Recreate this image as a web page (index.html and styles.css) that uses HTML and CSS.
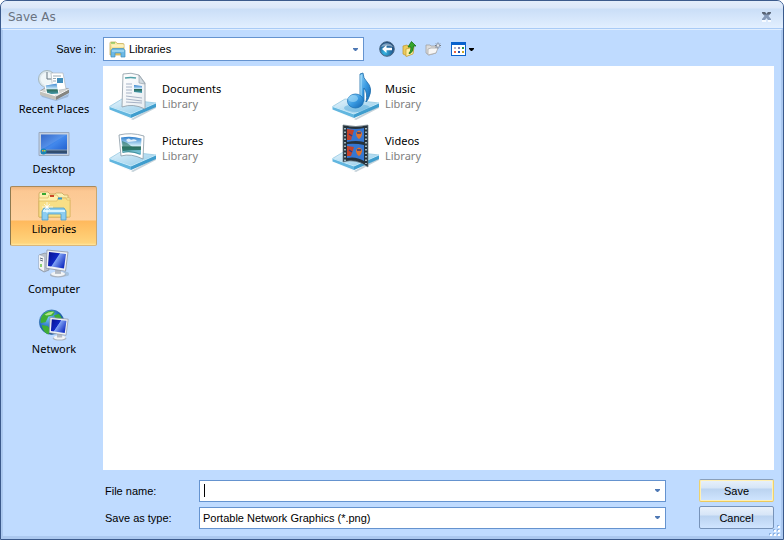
FILE: index.html
```
<!DOCTYPE html>
<html lang="en">
<head>
<meta charset="utf-8">
<title>Save As</title>
<link rel="stylesheet" href="styles.css">
</head>
<body>
<svg class="defs" aria-hidden="true">
  <defs>
    <linearGradient id="glass" x1="0" y1="0" x2="1" y2="1"><stop offset="0" stop-color="#e6f4fc"/><stop offset=".5" stop-color="#b9def2"/><stop offset="1" stop-color="#8fcbe8"/></linearGradient>
    <linearGradient id="screen" x1="0" y1="0" x2="1" y2=".6"><stop offset="0" stop-color="#06108f"/><stop offset=".5" stop-color="#1029c4"/><stop offset=".54" stop-color="#7fa2f4"/><stop offset="1" stop-color="#1733c4"/></linearGradient>
    <linearGradient id="desk" x1="0" y1="0" x2="1" y2="1"><stop offset="0" stop-color="#1c55c2"/><stop offset=".5" stop-color="#4288ec"/><stop offset="1" stop-color="#1c58ca"/></linearGradient>
    <linearGradient id="folder" x1="0" y1="0" x2="0" y2="1"><stop offset="0" stop-color="#fff5bd"/><stop offset="1" stop-color="#e9c65b"/></linearGradient>
    <linearGradient id="photo" x1="0" y1="0" x2="0" y2="1"><stop offset="0" stop-color="#2c7dcc"/><stop offset=".5" stop-color="#d4effa"/><stop offset=".56" stop-color="#2d6b59"/><stop offset="1" stop-color="#4ba4c0"/></linearGradient>
    <linearGradient id="paper" x1="0" y1="0" x2="1" y2="1"><stop offset="0" stop-color="#ffffff"/><stop offset="1" stop-color="#e6ecf1"/></linearGradient>
    <linearGradient id="note" x1="0" y1="0" x2="1" y2="1"><stop offset="0" stop-color="#8fd2f8"/><stop offset=".5" stop-color="#3a9be2"/><stop offset="1" stop-color="#1363ae"/></linearGradient>
    <radialGradient id="ball" cx=".35" cy=".75" r=".8"><stop offset="0" stop-color="#35b9e6"/><stop offset=".6" stop-color="#23649b"/><stop offset="1" stop-color="#173f70"/></radialGradient>
    <radialGradient id="earth" cx=".35" cy=".3" r=".8"><stop offset="0" stop-color="#7cc8f4"/><stop offset=".6" stop-color="#1d65bd"/><stop offset="1" stop-color="#0c3278"/></radialGradient>
    <symbol id="tray" viewBox="0 0 48 48">
      <path d="M1 38 22 47 47 34v2L24 48z" fill="#8ba6b6" opacity=".5"/>
      <path d="M.500 34.500 13 27 47 31 22 42z" fill="url(#glass)" stroke="#8cc4e0" stroke-width=".7"/>
      <path d="M.500 34.500 22 42v4L.500 37.500z" fill="#62b6df"/><path d="M22 42 47 31v4L22 46z" fill="#3f9dcd"/>
      <path d="M.500 34.500 22 42 47 31" fill="none" stroke="#d8f4ff" stroke-width=".8"/>
    </symbol>
    <symbol id="monitor" viewBox="0 0 24 28" preserveAspectRatio="none">
      <ellipse cx="13" cy="25" rx="8" ry="2.500" fill="#a9b3c0"/><ellipse cx="13" cy="24" rx="7" ry="2.300" fill="#f2f4f6"/>
      <path d="M10 19h6v5h-6z" fill="#b4bac4"/>
      <path d="M2 1 23 3 20.500 21.500 1 18.500z" fill="#eef1f5" stroke="#8c96a5" stroke-width=".8"/>
      <path d="M4 3 21 4.800 19 18.800 3 16.500z" fill="url(#screen)"/>
    </symbol>
  </defs>
</svg>

<div class="window" role="dialog" aria-labelledby="title">
  <header class="titlebar">
    <h1 id="title">Save As</h1>
    <button class="close" type="button" aria-label="Close">
      <svg width="11" height="10" viewBox="0 0 11 10"><path d="M1 9h4M7 9h3" stroke="#fff" stroke-width="1.500"/><path d="M1 0h3l1.500 2L7 0h3v1L7.500 4 10 7v1H7L5.500 6 4 8H1V7l2.500-3L1 1z" fill="#8499b8"/><path d="M1 0h3l1.500 2L7 0h3v1L8.500 2.500h-6L1 1z" fill="#596474"/></svg>
    </button>
  </header>

  <form class="content">
    <div class="toolbar">
      <label for="savein">Save in:</label>
      <div class="combo location">
        <svg class="combo-icon" width="17" height="17" viewBox="0 0 17 17"><path d="M1 2q0-1 1-1h5l1 1.500h6q1 0 1 1V14H1z" fill="url(#folder)" stroke="#c9ae5b" stroke-width=".8"/><path d="M2 2h4" stroke="#59b73a"/><path d="M3 5h12" stroke="#fffbdc"/><path d="M2 16V9.500l1.500-2h11l1.500 2V16h-4v-4H6v4z" fill="#6cb9e5" stroke="#3f8fbe" stroke-width=".7"/><path d="M3 10h12" stroke="#c2ebfb"/></svg>
        <select id="savein"><option>Libraries</option></select>
        <svg class="arrow" width="5" height="3" viewBox="0 0 5 3"><path d="M0 0h5v1L3 3H2L0 1z" fill="#4e78b4"/></svg>
      </div>
      <div class="tools">
        <button type="button" aria-label="Back"><svg width="16" height="16" viewBox="0 0 16 16"><circle cx="8" cy="8" r="7.300" fill="url(#ball)" stroke="#4a6683"/><path d="M2 6a6.500 6 0 0 1 12 0q-6-2-12 0z" fill="#c3d6e5" opacity=".6"/><path d="M3 8 7.500 4v2.800H13v2.400H7.500V12z" fill="#fff"/></svg></button>
        <button type="button" aria-label="Up one level"><svg width="16" height="16" viewBox="0 0 16 16"><path d="M1 5l4-1 1 1 5-1v8L5 15 1 13z" fill="#eccb5c" stroke="#bd942b" stroke-width=".7"/><path d="M4 8l8-2-1 7-7 2.500z" fill="#fff0a4" stroke="#c49b31" stroke-width=".7"/><path d="M7 12q2-1 2-6H6L9.500.500 14 5h-2.500q0 6-4 8z" fill="#36a62a" stroke="#16711a" stroke-width=".8"/></svg></button>
        <button type="button" aria-label="Create new folder"><svg width="16" height="16" viewBox="0 0 16 16"><path d="M1 4h4l1 1h5v7l-7 2-3-2z" fill="#dcdcdc" stroke="#a2a2a2" stroke-width=".8"/><path d="M3 8l3-1h7l-2 5-8 2z" fill="#f6f6f6" stroke="#a9a9a9" stroke-width=".8"/><path d="M13 1.500v6M10 4.500h6M11 2.500l4 4M15 2.500l-4 4" stroke="#747a83"/><circle cx="13" cy="4.500" r="1.300" fill="#e5eaf1"/></svg></button>
        <button type="button" aria-label="View menu"><svg width="24" height="14" viewBox="0 0 24 14"><rect x=".500" y=".500" width="14" height="13" fill="#fff" stroke="#0a62cd"/><path d="M0 0h15v3H0z" fill="#0a62cd"/><path d="M3 5h2v2H3z" fill="#b7b4c7"/><path d="M7 5h2v2H7z" fill="#827eac"/><path d="M11 5h2v2h-2z" fill="#289449"/><path d="M3 9h2v2H3z" fill="#ed623f"/><path d="M7 9h2v2H7z" fill="#194db0"/><path d="M11 9h2v2h-2z" fill="#cda629"/><path d="M18 6h5v1l-2 2h-1l-2-2z" fill="#000"/></svg></button>
      </div>
    </div>

    <div class="browser">
      <nav class="places" aria-label="Places">
        <button type="button">
          <svg width="32" height="32" viewBox="0 0 32 32"><path d="M2 25 18 31 31 25 30 28 18 32 4 28z" fill="#8097b3" opacity=".5"/><circle cx="9" cy="10" r="8.500" fill="#dce7ec" stroke="#a3b6bd"/><circle cx="9" cy="10" r="6.500" fill="#eff6f8"/><path d="M9 3v7h5" fill="none" stroke="#65757e"/><path d="M2 22 12 16 31 20 19 27z" fill="#d5d5d2" stroke="#8a8a88" stroke-width=".7"/><path d="M13 4 25 4 28 20 15 22z" fill="#fff" stroke="#b0b8be" stroke-width=".7"/><path d="M15 7h8M15 9.500h3M15 12h3" stroke="#9aabb6"/><path d="M19 9h6v5h-6z" fill="#408dbb"/><path d="M7 16 19 14 21 25 9 26z" fill="url(#photo)" stroke="#fff"/><path d="M2 22 18 27v4L2 26z" fill="#c3c2bc"/><path d="M18 27 31 20v4L18 31z" fill="#858581"/><path d="M2 22 18 27 31 20" fill="none" stroke="#fafafa"/></svg>
          <span>Recent Places</span>
        </button>
        <button type="button">
          <svg width="32" height="32" viewBox="0 0 32 32"><path d="M1 3.500h30v23H1z" fill="#c5d0df" stroke="#9aa9bf"/><path d="M3 5.500h26v19H3z" fill="url(#desk)"/><path d="M3 5.500h26L3 21z" fill="#fff" opacity=".12"/><path d="M3 21h26v3.500H3z" fill="#314d70"/><path d="M8 21h21" stroke="#8199b4"/><circle cx="5.500" cy="22.500" r="3" fill="#1785b9"/><path d="M4 21h1.500v1.500H4z" fill="#f3a336"/><path d="M6 21h1.500v1.500H6z" fill="#a9dd4a"/></svg>
          <span>Desktop</span>
        </button>
        <button type="button" class="selected" aria-pressed="true">
          <svg width="34" height="32" viewBox="0 0 34 32"><path d="M2 5q0-2 2-2h7l2 2h5l1-1h6l2 2h4v22H2z" fill="url(#folder)" stroke="#c9a65b" stroke-width=".8"/><path d="M2 9h9l1-3h8l2 3h11v19H2z" fill="#fff0ad" stroke="#d8b866" stroke-width=".7"/><path d="M2 12h18l1-3h8l1 2h3v17H2z" fill="#f8df86" stroke="#d9b560" stroke-width=".7"/><path d="M5 5h4" stroke="#35a832" stroke-width="2"/><path d="M13 7h4" stroke="#cc4726" stroke-width="2"/><path d="M21 9.500h4" stroke="#3097cc" stroke-width="2"/><path d="M5 31V22l2-3h20l2 3v9h-5v-6H11v6z" fill="#8ccdf0" stroke="#4d9dc7" stroke-width=".8"/><path d="M6 22h22" stroke="#d8f5ff" stroke-width="2"/><path d="M10 13v11M5 18h11M7 15l6 6M13 15l-6 6" stroke="#fff" stroke-width=".7"/><circle cx="10" cy="18" r="1.500" fill="#fff"/></svg>
          <span>Libraries</span>
        </button>
        <button type="button">
          <svg width="32" height="32" viewBox="0 0 32 32"><path d="M1 6 7 4l4 2v15l-5 2-5-3z" fill="#b9c1cb" stroke="#868e99" stroke-width=".7"/><path d="M1 6l5 2v14l-5-3z" fill="#f3f4f5"/><path d="M2 9l3 1M2 11l3 1" stroke="#5d6c7d"/><path d="M3 15v3" stroke="#66c444" stroke-width="1.500"/><path d="M25 23q6-1 6 2t-5 2-3-2z" fill="#a6c2df"/><use href="#monitor" x="7" y="0" width="24" height="29"/></svg>
          <span>Computer</span>
        </button>
        <button type="button">
          <svg width="34" height="34" viewBox="0 0 34 34"><circle cx="14.500" cy="14" r="13" fill="url(#earth)" stroke="#2566a4" stroke-width=".7"/><path d="M5 6q6-6 13-3l-2 4-5 1-3 6-5 1q-1-5 2-9zM4 17l6 1 4 4-3 5q-6-2-7-10zM17 7l5-2q5 5 4 10l-6-3z" fill="#3fae35"/><path d="M7 6q5-4 10-3l-3 3-5 1z" fill="#b1e587"/><use href="#monitor" x="11" y="8" width="22" height="26"/></svg>
          <span>Network</span>
        </button>
      </nav>

      <ul class="files">
        <li><svg width="48" height="48" viewBox="0 0 48 48"><use href="#tray" width="48" height="48"/><path d="M14 2Q22 0 30 3L36 11V37Q24 31 13 35z" fill="url(#paper)" stroke="#8d9aa5" stroke-width=".8"/><path d="M30 3v8l6 1z" fill="#d2dce2" stroke="#8d9aa5" stroke-width=".6"/><path d="M16 6q6-1 11 0" fill="none" stroke="#52a1a9" stroke-width="1.500"/><path d="M17 12h6M17 15h6M17 18h6M17 21h6M17 24l16 2M17 27l16 2M17 30l16 1" stroke="#a7b3c6"/><path d="M25 13l8 1v7l-8-1z" fill="url(#photo)"/></svg><span class="name">Documents</span><span class="kind">Library</span></li>
        <li><svg width="48" height="48" viewBox="0 0 48 48"><use href="#tray" width="48" height="48"/><ellipse cx="25" cy="36" rx="13" ry="4" fill="#4ba4d7" opacity=".45"/><path d="M28 2 31 1q0 5 4 9 6 6 2 15-1 3-3 5 2-9-2-14V29h-4z" fill="url(#note)" stroke="#176aa9" stroke-width=".8"/><path d="M29 3v24" stroke="#b6e8ff"/><ellipse cx="23.500" cy="29" rx="8" ry="7" fill="url(#note)" stroke="#1d74b8" stroke-width=".8"/><ellipse cx="21" cy="26.500" rx="5" ry="3.500" fill="#a5dcf8" opacity=".6"/></svg><span class="name">Music</span><span class="kind">Library</span></li>
        <li><svg width="48" height="48" viewBox="0 0 48 48"><use href="#tray" width="48" height="48"/><path d="M10 11Q22 8 35 12L34 35Q22 29 12 32z" fill="#fff" stroke="#8698a5" stroke-width=".8"/><path d="M12 13.500q10-2 20.500 1L31.500 31q-9-4-18-2z" fill="url(#photo)"/><path d="M13 17q5 1 9 5t10 2v6q-9-4-18-2z" fill="#2b7666" opacity=".65"/><path d="M17 16q3-3 5 0 4-2 6 1l-9 1z" fill="#fff" opacity=".8"/><path d="M14 27q9-1 18-1v4q-9-4-18-2z" fill="#73bdd1"/></svg><span class="name">Pictures</span><span class="kind">Library</span></li>
        <li><svg width="48" height="48" viewBox="0 0 48 48"><use href="#tray" width="48" height="48"/><path d="M11 1Q24 4 36 1V43Q24 34 11 38z" fill="#26323b" stroke="#697a83" stroke-width=".7"/><path d="M15 4q9 2 17 0v14q-8-2-17 0zM15 20q9-1 17 1v16q-8-5-17-3z" fill="#3577d2"/><path d="M15 5l7 1-3 10h-4zM15 22l7 1-3 9h-4z" fill="#c3422b"/><path d="M24 9q3-5 6 0 0 4-3 6-3-2-3-6zM24 26q3-5 6 0 0 4-3 6-3-2-3-6z" fill="#df722d"/><path d="M25 9h4M25 26h4M17 10l3 2M17 26l3 2" stroke="#303c80" stroke-width="1.500"/><path d="M13 4v33M34 4v36" stroke="#c8e0ea" stroke-width="1.500" stroke-dasharray="1.500 2"/></svg><span class="name">Videos</span><span class="kind">Library</span></li>
      </ul>
    </div>

    <div class="fields">
      <label for="filename">File name:</label>
      <div class="combo">
        <input id="filename" type="text"><i class="caret"></i>
        <svg class="arrow" width="5" height="3" viewBox="0 0 5 3"><path d="M0 0h5v1L3 3H2L0 1z" fill="#4e78b4"/></svg>
      </div>
      <button class="action default" type="submit">Save</button>
      <label for="filetype">Save as type:</label>
      <div class="combo">
        <select id="filetype"><option>Portable Network Graphics (*.png)</option></select>
        <svg class="arrow" width="5" height="3" viewBox="0 0 5 3"><path d="M0 0h5v1L3 3H2L0 1z" fill="#4e78b4"/></svg>
      </div>
      <button class="action" type="button">Cancel</button>
    </div>
  </form>
  <svg class="grip" width="11" height="11" viewBox="0 0 11 11" aria-hidden="true"><path d="M8 0h2v2H8zM4 4h2v2H4zM8 4h2v2H8zM0 8h2v2H0zM4 8h2v2H4zM8 8h2v2H8z" fill="#8eb2df"/><path d="M9 1h2v2H9zM5 5h2v2H5zM9 5h2v2H9zM1 9h2v2H1zM5 9h2v2H5zM9 9h2v2H9z" fill="#fff"/></svg>
</div>
</body>
</html>
```
FILE: styles.css
```
* { box-sizing: border-box; }
body { margin: 0; background: #fff; font: 11px/16px "Liberation Sans", sans-serif; color: #000; }
svg { display: block; }
.defs { position: absolute; width: 0; height: 0; }
button, input, select { font: inherit; color: inherit; }

.window {
  position: relative;
  min-height: 100vh;
  display: flex;
  flex-direction: column;
  border: 1px solid #3b5a8c;
  border-radius: 7px 7px 0 0;
  background: #bfdbff;
  overflow: hidden;
}
.titlebar {
  display: flex;
  align-items: center;
  justify-content: space-between;
  height: 28px;
  padding: 5px 11px 0 7px;
  background: linear-gradient(#e3edfb 0, #dbe7f9 7px, #cadef7 8px, #e2efff 27px);
  border-bottom: 1px solid #a9cbf6;
}
.titlebar h1 { margin: 0; font: 12px/18px "DejaVu Sans", sans-serif; color: #69727f; }
.close { padding: 0; border: 0; background: none; }

.content {
  flex: 1;
  display: flex;
  flex-direction: column;
  padding: 7px 7px;
  border: solid #abc8ef;
  border-width: 0 2px 3px;
  border-top: 1px solid #e0eeff;
}
.toolbar { display: flex; align-items: center; margin-bottom: 5px; }
.toolbar label { width: 86px; margin-right: 7px; text-align: right; }
.combo {
  position: relative;
  display: flex;
  align-items: center;
  height: 22px;
  background: #fff;
  border: 1px solid #6593cf;
}
.location { width: 261px; height: 24px; padding-left: 5px; }
.combo input, .combo select {
  flex: 1;
  min-width: 0;
  height: 100%;
  padding: 0 16px 0 3px;
  border: 0;
  outline: 0;
  background: none;
  appearance: none;
}
.arrow { position: absolute; right: 5px; pointer-events: none; }
.caret { position: absolute; left: 4px; width: 1px; height: 13px; background: #000; }
.tools { display: flex; align-items: center; gap: 7px; margin-left: 15px; }
.tools button { padding: 0; border: 0; background: none; }
.tools button:last-child { margin-left: 3px; }

.browser { flex: 1; display: flex; gap: 6px; }
.places { width: 87px; font: 11px/16px "Noto Sans", sans-serif; }
.places button {
  display: flex;
  flex-direction: column;
  align-items: center;
  width: 100%;
  height: 60px;
  padding: 2px 0 0 1px;
  border: 1px solid transparent;
  background: none;
  white-space: nowrap;
}
.places svg { height: 32px; }
.places .selected {
  border-color: #a98a5c #c9a770 #d9b77d #8e794f;
  border-radius: 2px;
  background: linear-gradient(#efb67f 0, #fcc893 4px, #fed2a1 33px, #ffb95c 34px, #ffd47c 56px, #ffe7a0 58px);
}
.files {
  flex: 1;
  display: grid;
  grid-template-columns: repeat(auto-fill, 223px);
  grid-auto-rows: 52px;
  align-content: start;
  margin: 0;
  padding: 4px 6px;
  list-style: none;
  background: #fff;
  font: 11px/15px "Noto Sans", sans-serif;
}
.files li {
  display: grid;
  grid-template-columns: 48px 1fr;
  grid-template-rows: 15px 15px;
  align-content: center;
  column-gap: 5px;
}
.files li svg { grid-row: 1 / 3; align-self: center; }
.kind { color: #808080; }

.fields {
  display: grid;
  grid-template-columns: 94px 1fr 75px;
  gap: 4px 0;
  align-items: center;
  padding: 9px 0 0 95px;
}
.fields .combo { margin-right: 33px; }
.action {
  height: 23px;
  padding: 0;
  border: 1px solid #7793b9;
  border-radius: 2px;
  background: linear-gradient(#e9f1fb 0, #d6e5f7 8px, #bbd3f0 9px, #d0e5ff 100%);
}
.default { border-color: #8ba0ba #ecd16f #ecc95c; box-shadow: inset 0 0 0 1px #fff0b4; }
.grip { position: absolute; right: 3px; bottom: 3px; }
```
